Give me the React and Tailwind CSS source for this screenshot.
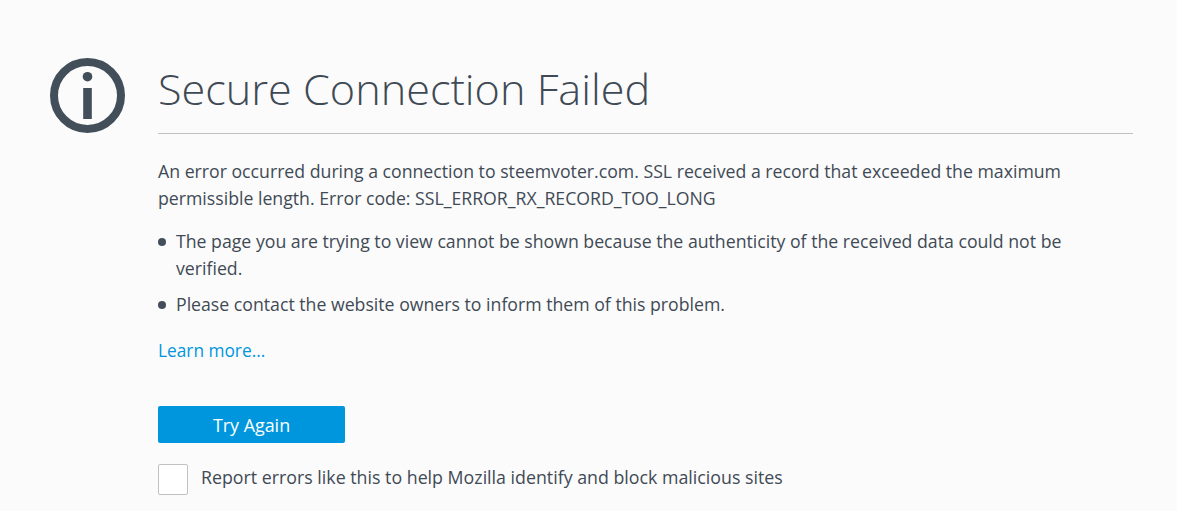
import React from 'react';

const App = () => {
  return (
    <div className="w-[1177px] h-[511px] overflow-hidden bg-[#fbfbfb] text-[#3f4a55] font-['Open_Sans','Noto_Sans',sans-serif] flex pt-[58px] pl-[50px]">
      <svg className="w-[75px] h-[75px] shrink-0" viewBox="0 0 75 75">
        <circle cx="37.5" cy="37.5" r="33.5" fill="none" stroke="#424e5a" strokeWidth="8" />
        <circle cx="37.5" cy="18.7" r="4.8" fill="#424e5a" />
        <rect x="33.2" y="30" width="8.6" height="31" fill="#424e5a" />
      </svg>

      <div className="ml-[33px] w-[975px]">
        <h1 className="text-[43.2px] leading-[62px] font-light pb-[13px] border-b border-[#c1c1c1]">Secure Connection Failed</h1>
        <p className="mt-[24px] text-[17.7px] leading-[27px]">
          An error occurred during a connection to steemvoter.com. SSL received a record that exceeded the maximum permissible length. Error code: SSL_ERROR_RX_RECORD_TOO_LONG
        </p>
        <ul className="mt-[16px] text-[17.7px] leading-[27px] pr-[10px]">
          <li className="flex">
            <span className="w-[8px] h-[8px] mt-[10px] mr-[10px] rounded-full bg-[#424e5a] shrink-0"></span>
            <span>The page you are trying to view cannot be shown because the authenticity of the received data could not be verified.</span>
          </li>
          <li className="flex mt-[9px]">
            <span className="w-[8px] h-[8px] mt-[10px] mr-[10px] rounded-full bg-[#424e5a] shrink-0"></span>
            <span>Please contact the website owners to inform them of this problem.</span>
          </li>
        </ul>
        <a href="#" className="block mt-[18px] pt-[1px] text-[17.3px] leading-[27px] text-[#0096dd]">Learn more...</a>
        <button className="block mt-[42px] w-[187px] h-[37px] pt-[1px] rounded-[2px] bg-[#0096dd] text-white text-[17.9px]">Try Again</button>
        <div className="flex items-center mt-[21px]">
          <span className="w-[30px] h-[31px] rounded-[2px] border border-[#c1c1c1] bg-white shrink-0"></span>
          <span className="ml-[13px] pb-[4px] text-[17.8px] leading-[27px]">Report errors like this to help Mozilla identify and block malicious sites</span>
        </div>
      </div>
    </div>
  );
};

export default App;
